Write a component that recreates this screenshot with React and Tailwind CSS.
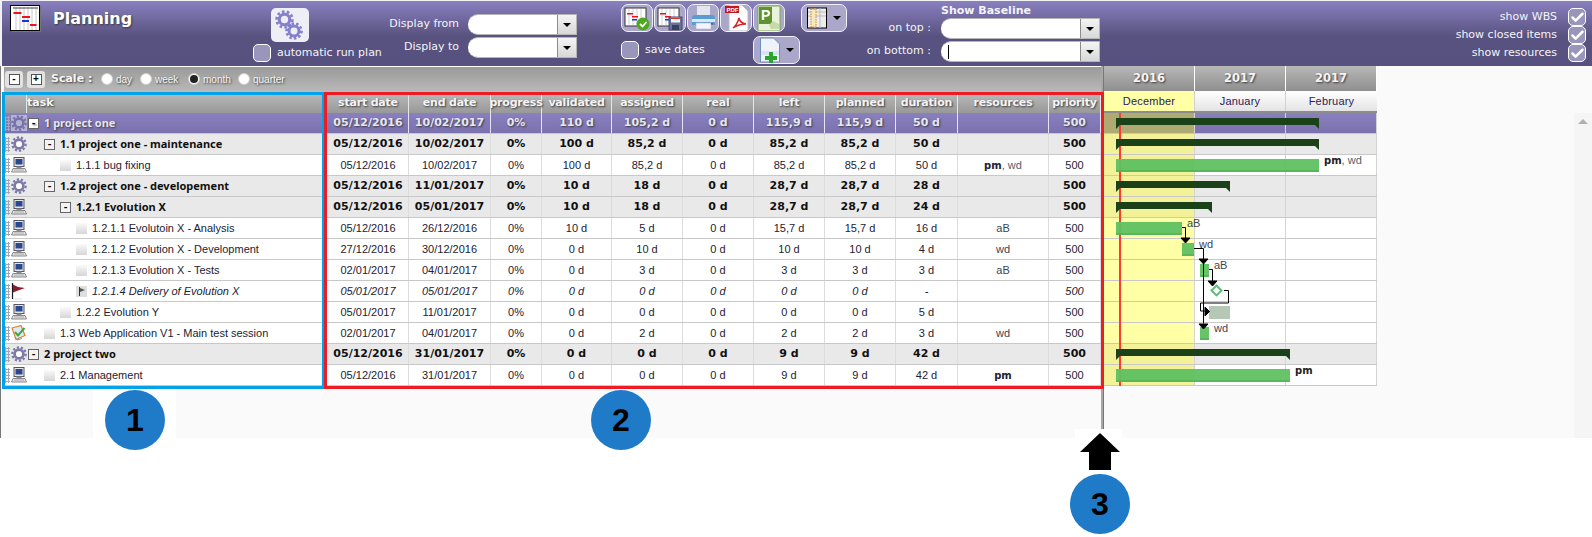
import { Check } from 'lucide-react';

const columns = [
  { key: 'start', title: 'start date', w: 'w-[83px] pl-[2px]' },
  { key: 'end', title: 'end date', w: 'w-[82px]' },
  { key: 'progress', title: 'progress', w: 'w-[51px]' },
  { key: 'validated', title: 'validated', w: 'w-[70px]' },
  { key: 'assigned', title: 'assigned', w: 'w-[71px]' },
  { key: 'real', title: 'real', w: 'w-[71px]' },
  { key: 'left', title: 'left', w: 'w-[71px]' },
  { key: 'planned', title: 'planned', w: 'w-[71px]' },
  { key: 'duration', title: 'duration', w: 'w-[62px]' },
  { key: 'resources', title: 'resources', w: 'w-[91px]' },
  { key: 'priority', title: 'priority', w: 'w-[52px]' },
];

const rows = [
  { level: 0, label: '1 project one', kind: 'top', icon: 'gear', open: true, start: '05/12/2016', end: '10/02/2017', validated: '110 d', assigned: '105,2 d', real: '0 d', left: '115,9 d', planned: '115,9 d', duration: '50 d', dec: 'bg-[#aeaa72]', bar: { type: 'sum', x: 1116, to: 1319 } },
  { level: 1, label: '1.1 project one - maintenance', kind: 'sum', icon: 'gear', open: true, start: '05/12/2016', end: '10/02/2017', validated: '100 d', assigned: '85,2 d', real: '0 d', left: '85,2 d', planned: '85,2 d', duration: '50 d', dec: 'bg-[#f3f299]', bar: { type: 'sum', x: 1116, to: 1319 } },
  { level: 2, label: '1.1.1 bug fixing', icon: 'pc', start: '05/12/2016', end: '10/02/2017', validated: '100 d', assigned: '85,2 d', real: '0 d', left: '85,2 d', planned: '85,2 d', duration: '50 d', res: 'pmwd', dec: 'bg-[#f3f299]', bar: { type: 'task', x: 1116, to: 1319, tag: 'pmwd', tagX: 1324 } },
  { level: 1, label: '1.2 project one - developement', kind: 'sum', icon: 'gear', open: true, start: '05/12/2016', end: '11/01/2017', validated: '10 d', assigned: '18 d', real: '0 d', left: '28,7 d', planned: '28,7 d', duration: '28 d', dec: 'bg-[#f3f299]', bar: { type: 'sum', x: 1116, to: 1230 } },
  { level: 2, label: '1.2.1 Evolution X', kind: 'sum', icon: 'pc', open: true, start: '05/12/2016', end: '05/01/2017', validated: '10 d', assigned: '18 d', real: '0 d', left: '28,7 d', planned: '28,7 d', duration: '24 d', dec: 'bg-[#f3f299]', bar: { type: 'sum', x: 1116, to: 1212 } },
  { level: 3, label: '1.2.1.1 Evolutoin X - Analysis', icon: 'pc', start: '05/12/2016', end: '26/12/2016', validated: '10 d', assigned: '5 d', real: '0 d', left: '15,7 d', planned: '15,7 d', duration: '16 d', res: 'aB', bar: { type: 'task', x: 1116, to: 1182, tag: 'aB', tagX: 1187 } },
  { level: 3, label: '1.2.1.2 Evolution X - Development', icon: 'pc', start: '27/12/2016', end: '30/12/2016', validated: '0 d', assigned: '10 d', real: '0 d', left: '10 d', planned: '10 d', duration: '4 d', res: 'wd', bar: { type: 'task', x: 1182, to: 1194, tag: 'wd', tagX: 1199 } },
  { level: 3, label: '1.2.1.3 Evolution X - Tests', icon: 'pc', start: '02/01/2017', end: '04/01/2017', validated: '0 d', assigned: '3 d', real: '0 d', left: '3 d', planned: '3 d', duration: '3 d', res: 'aB', bar: { type: 'task', x: 1200, to: 1209, tag: 'aB', tagX: 1214 } },
  { level: 3, label: '1.2.1.4 Delivery of Evolution X', italic: true, icon: 'flag', leaf: 'flag', start: '05/01/2017', end: '05/01/2017', validated: '0 d', assigned: '0 d', real: '0 d', left: '0 d', planned: '0 d', duration: '-', bar: { type: 'mile', x: 1216 } },
  { level: 2, label: '1.2.2 Evolution Y', icon: 'pc', start: '05/01/2017', end: '11/01/2017', validated: '0 d', assigned: '0 d', real: '0 d', left: '0 d', planned: '0 d', duration: '5 d', bar: { type: 'idle', x: 1209, to: 1230 } },
  { level: 1, label: '1.3 Web Application V1 - Main test session', icon: 'test', start: '02/01/2017', end: '04/01/2017', validated: '0 d', assigned: '2 d', real: '0 d', left: '2 d', planned: '2 d', duration: '3 d', res: 'wd', bar: { type: 'task', x: 1200, to: 1209, tag: 'wd', tagX: 1214 } },
  { level: 0, label: '2 project two', kind: 'sum', icon: 'gear', open: true, start: '05/12/2016', end: '31/01/2017', validated: '0 d', assigned: '0 d', real: '0 d', left: '9 d', planned: '9 d', duration: '42 d', dec: 'bg-[#f3f299]', bar: { type: 'sum', x: 1116, to: 1290 } },
  { level: 1, label: '2.1 Management', icon: 'pc', start: '05/12/2016', end: '31/01/2017', validated: '0 d', assigned: '0 d', real: '0 d', left: '9 d', planned: '9 d', duration: '42 d', res: 'pm', dec: 'bg-[#f3f299]', bar: { type: 'task', x: 1116, to: 1290, tag: 'pm', tagX: 1295 } },
];

const shadow = '[text-shadow:1px_1px_2px_#3a3a3a]';
const bold = "font-['DejaVu_Sans',sans-serif] font-bold";

const Gear = ({ size = 16, color = '#7b7aa8', hole = '#ffffff' }) => (
  <svg width={size} height={size} viewBox="0 0 16 16">
    <circle cx="8" cy="8" r="6.6" fill="none" stroke={color} strokeWidth="2.4" strokeDasharray="2.2 1.9" />
    <circle cx="8" cy="8" r="4.4" fill="none" stroke={color} strokeWidth="2.6" />
    <circle cx="8" cy="8" r="2.6" fill={hole} />
  </svg>
);

const Computer = () => (
  <svg width="16" height="16" viewBox="0 0 16 16">
    <rect x="3" y="0.5" width="10" height="9" fill="#e4e4e8" stroke="#55555f" />
    <rect x="4.5" y="2" width="7" height="5.5" fill="#28498f" />
    <rect x="5.5" y="9.5" width="5" height="1.5" fill="#8a8a92" />
    <path d="M2 11.5h12l1.5 3.5H.5z" fill="#e6e6e6" stroke="#6d6d73" strokeWidth="0.8" />
    <path d="M3 13h10" stroke="#9a9a9a" strokeWidth="0.8" />
  </svg>
);

const Flag = () => (
  <svg width="16" height="17" viewBox="0 0 16 17">
    <path d="M1.5 0v16" stroke="#1a1a1a" strokeWidth="1.2" />
    <path d="M2 1.5l5 2.5 7 1-7 2.5-5 2z" fill="#8f1a2c" />
    <path d="M2 16h9" stroke="#dddddd" strokeWidth="1" />
  </svg>
);

const TestIcon = () => (
  <svg width="16" height="16" viewBox="0 0 16 16">
    <path d="M1 3l9-2.5 4 10-9 4z" fill="#dfe8f5" stroke="#d9822b" strokeWidth="1.2" />
    <path d="M4 7l3 3.5L13.5 3" fill="none" stroke="#3fa845" strokeWidth="2" />
    <path d="M4 12l2 3 5-1.5" fill="none" stroke="#7d8fb5" strokeWidth="1" />
  </svg>
);

const RowIcon = ({ name, top }) => {
  if (name === 'gear') return <Gear hole={top ? '#b5b2d6' : '#ffffff'} color={top ? '#7573a8' : '#7b7aa8'} />;
  if (name === 'pc') return <Computer />;
  if (name === 'flag') return <Flag />;
  return <TestIcon />;
};

const Logo = () => (
  <svg width="31" height="27" viewBox="0 0 31 27">
    <rect x="0.5" y="0.5" width="29" height="25" fill="#ffffff" stroke="#000000" />
    <path d="M6 2v23M10 2v23M14 2v23M18 2v23M22 2v23M26 2v23" stroke="#c8c8c8" />
    <path d="M3 3h25" stroke="#444444" />
    <rect x="3.5" y="7" width="8" height="2" fill="#e8141c" />
    <rect x="12" y="11" width="8" height="2" fill="#e8141c" />
    <rect x="12" y="15" width="7" height="2" fill="#1f33d8" />
    <rect x="20" y="19" width="6.5" height="2" fill="#e8141c" />
    <path d="M30.5 2v24.5H2" stroke="#777777" fill="none" />
  </svg>
);

const MiniGantt = () => (
  <g>
    <rect x="2" y="3" width="21" height="18" fill="#ffffff" stroke="#333333" />
    <path d="M6 4v16M10 4v16M14 4v16M18 4v16" stroke="#cfcfcf" />
    <rect x="4" y="8" width="6" height="1.5" fill="#e8141c" />
    <rect x="9" y="11" width="6" height="1.5" fill="#e8141c" />
    <rect x="9" y="14" width="5" height="1.5" fill="#1f33d8" />
  </g>
);

const ToolIcon = ({ name }) => {
  if (name === 'validate') {
    return (
      <svg width="28" height="26" viewBox="0 0 28 26">
        <MiniGantt />
        <circle cx="20" cy="19" r="6.5" fill="#4ea81e" />
        <path d="M17 19l2.5 2.5 4-4.5" fill="none" stroke="#ffffff" strokeWidth="1.8" />
      </svg>
    );
  }
  if (name === 'save') {
    return (
      <svg width="28" height="26" viewBox="0 0 28 26">
        <MiniGantt />
        <rect x="13" y="12" width="13" height="13" fill="#67719a" stroke="#444a6c" />
        <rect x="15" y="12.5" width="9" height="5" fill="#f3f3f3" />
        <rect x="15" y="12.5" width="9" height="1.5" fill="#d9352e" />
        <rect x="16" y="20" width="7" height="5" fill="#3a3f5e" />
      </svg>
    );
  }
  if (name === 'print') {
    return (
      <svg width="28" height="26" viewBox="0 0 28 26">
        <rect x="8" y="1" width="13" height="9" fill="#e3e6ef" />
        <path d="M3 13q0-3 3-3h17q3 0 3 3v7H3z" fill="#5c9bd0" />
        <rect x="3" y="14" width="23" height="3" fill="#d7e7f4" />
        <rect x="7" y="18" width="15" height="6" fill="#f4f5f9" stroke="#a9b4c8" strokeWidth="0.6" />
        <rect x="22" y="18" width="2" height="1.5" fill="#d9352e" />
      </svg>
    );
  }
  if (name === 'pdf') {
    return (
      <svg width="28" height="28" viewBox="0 0 28 28">
        <path d="M7 1h13l6 6v20H7z" fill="#ffffff" stroke="#b9b9b9" />
        <rect x="3" y="2" width="14" height="7" fill="#c4161c" />
        <text x="4.5" y="8" fontSize="6" fontWeight="700" fill="#ffffff" fontFamily="Liberation Sans, sans-serif">PDF</text>
        <path d="M11 24q4-3 6-10q1 5 7 6q-7 0-13 4z" fill="none" stroke="#d8262c" strokeWidth="1.5" />
      </svg>
    );
  }
  if (name === 'project') {
    return (
      <svg width="28" height="28" viewBox="0 0 28 28">
        <rect x="3" y="2" width="22" height="25" fill="#e9f2da" stroke="#7ea654" />
        <rect x="4" y="3" width="13" height="17" fill="#5e9334" />
        <text x="6" y="16" fontSize="14" fontWeight="700" fill="#ffffff" fontFamily="Liberation Sans, sans-serif">P</text>
        <path d="M14 21l4-4 6 3v5h-8z" fill="#c5dba8" />
      </svg>
    );
  }
  if (name === 'columns') {
    return (
      <svg width="20" height="22" viewBox="0 0 20 22">
        <rect x="0.5" y="1" width="19" height="20" fill="#ececec" stroke="#000000" />
        <path d="M8 1v20M13 1v20M1 5h18M1 9h18" stroke="#bdbdbd" />
        <rect x="4" y="2" width="5" height="18" fill="#f6e7bd" stroke="#d88a16" strokeDasharray="1.5 1" />
      </svg>
    );
  }
  return (
    <svg width="20" height="26" viewBox="0 0 20 26">
      <path d="M0.5 1h13l6 6v18H.5z" fill="#eef3fb" stroke="#6f8fbc" />
      <path d="M1 14h18v4H1z" fill="#d7e2f2" />
      <path d="M9 15h4v4h4v4h-4v3H9v-3H5v-4h4z" fill="#2aa52a" />
    </svg>
  );
};

const Caret = () => <span className="w-0 h-0 border-x-[4px] border-x-transparent border-t-[4px] border-t-black" />;

const ToolButton = ({ name, width = 'w-[32px]', height = 'h-[28px]', caret }) => (
  <button className={`${width} ${height} shrink-0 rounded-[7px] border border-[#f0f0f8] bg-[#aaa7cb] flex items-center justify-center gap-[6px] overflow-hidden`}>
    <ToolIcon name={name} />
    {caret && <Caret />}
  </button>
);

const CheckBox = ({ checked, className = '' }) => (
  <span className={`w-[18px] h-[18px] shrink-0 rounded-[5px] border border-white bg-[#9896bb] flex items-center justify-center ${className}`}>
    {checked && <Check size={15} strokeWidth={4} className="text-white" />}
  </span>
);

const Combo = ({ width, caretMark }) => (
  <div className={`${width} h-[21px] flex rounded-l-[10px] bg-white border-y border-r border-[#b5b5b5]`}>
    <div className="flex-1 flex items-center pl-[7px]">
      {caretMark && <span className="w-px h-[14px] bg-black" />}
    </div>
    <div className="w-[19px] border-l border-[#8c8c8c] bg-gradient-to-b from-[#f4f4f4] to-[#d8d8d8] flex items-center justify-center">
      <Caret />
    </div>
  </div>
);

const Toolbar = () => (
  <div className="h-[66px] flex pl-[3px] border-t border-l-2 border-[#f2f2f2] bg-gradient-to-b from-[#8a80c0] via-[#58527f] via-[55%] to-[#56517f] text-[#f4f4f8] text-[12px] font-['DejaVu_Sans',sans-serif]">
    <div className="w-[248px] shrink-0 flex pl-[5px] pt-[4px]">
      <Logo />
      <span className={`ml-[12px] mt-[2px] text-[16px] ${bold} text-white ${shadow}`}>Planning</span>
    </div>
    <div className="w-[130px] shrink-0">
      <div className="ml-[18px] mt-[7px] w-[38px] h-[34px] rounded-[5px] bg-[#eeeef6] relative">
        <span className="absolute left-[4px] top-[2px]"><Gear size={19} color="#8480cc" hole="#eeeef6" /></span>
        <span className="absolute left-[14px] top-[14px]"><Gear size={18} color="#8480cc" hole="#eeeef6" /></span>
      </div>
      <div className="mt-[2px] flex items-center gap-[6px] whitespace-nowrap text-[11px]">
        <CheckBox />
        automatic run plan
      </div>
    </div>
    <div className="w-[238px] shrink-0 pt-[13px] text-[11px]">
      <div className="flex items-center">
        <span className="w-[76px] text-right">Display from</span>
        <span className="ml-[9px]"><Combo width="w-[109px]" /></span>
      </div>
      <div className="flex items-center mt-[2px]">
        <span className="w-[76px] text-right">Display to</span>
        <span className="ml-[9px]"><Combo width="w-[109px]" /></span>
      </div>
    </div>
    <div className="w-[180px] shrink-0 pt-[3px]">
      <div className="flex gap-px">
        <ToolButton name="validate" />
        <ToolButton name="save" />
        <ToolButton name="print" />
        <ToolButton name="pdf" />
        <ToolButton name="project" />
      </div>
      <div className="flex mt-[4px]">
        <div className="w-[132px] flex items-center gap-[6px] text-[11px] mt-[5px] h-[18px]">
          <CheckBox />
          save dates
        </div>
        <ToolButton name="add" width="w-[47px]" height="h-[28px]" caret />
      </div>
    </div>
    <div className="w-[46px] shrink-0 pt-[3px]">
      <ToolButton name="columns" width="w-[46px]" caret />
    </div>
    <div className="w-[253px] shrink-0 text-[11px]">
      <div className={`h-[17px] ml-[94px] ${bold} text-[11px] leading-[20px] whitespace-nowrap`}>Show Baseline</div>
      <div className="flex items-center">
        <span className="w-[84px] text-right">on top :</span>
        <span className="ml-[10px]"><Combo width="w-[159px]" /></span>
      </div>
      <div className="flex items-center mt-[2px]">
        <span className="w-[84px] text-right">on bottom :</span>
        <span className="ml-[10px]"><Combo width="w-[159px]" caretMark /></span>
      </div>
    </div>
    <div className="flex-1 pt-[7px] pr-[6px] text-[11px] flex flex-col items-end">
      {['show WBS', 'show closed items', 'show resources'].map((item) => (
        <div key={item} className="h-[18px] flex items-center gap-[11px]">
          {item}
          <CheckBox checked />
        </div>
      ))}
    </div>
  </div>
);

const Radio = ({ label, on, width }) => (
  <div className={`${width} flex items-center gap-[3px]`}>
    <span className="w-[12px] h-[12px] rounded-full bg-white border border-[#cfcfcf] flex items-center justify-center">
      {on && <span className="w-[8px] h-[8px] rounded-full bg-[#222222]" />}
    </span>
    <span className={`text-[10px] text-[#f4f4f4] ${shadow}`}>{label}</span>
  </div>
);

const SmallBtn = ({ sign }) => (
  <span className="w-[18px] h-[17px] rounded-[3px] bg-[#e2e2e2] flex items-center justify-center">
    <span className="w-[11px] h-[11px] bg-white border border-[#555555] text-[10px] leading-[8px] text-center text-black font-bold">{sign}</span>
  </span>
);

const ScaleBar = () => (
  <div className="h-[25px] flex items-center pl-px border-t border-white bg-gradient-to-b from-[#9a9a9a] to-[#b8b8b8]">
    <SmallBtn sign="-" />
    <span className="ml-[4px]"><SmallBtn sign="+" /></span>
    <span className={`ml-[6px] w-[50px] text-[11px] ${bold} text-[#f6f6f6] ${shadow}`}>Scale :</span>
    <Radio label="day" width="w-[39px]" />
    <Radio label="week" width="w-[48px]" />
    <Radio label="month" on width="w-[50px]" />
    <Radio label="quarter" width="w-[60px]" />
  </div>
);

const headCell = `h-full flex items-center justify-center border-r border-[#e6e6e6] text-[11px] tracking-[-0.2px] ${bold} text-[#f4f4f4] ${shadow}`;

const HeaderRow = () => (
  <div className="h-[22px] flex bg-gradient-to-b from-[#bdbdbd] to-[#989898] pt-[3px]">
    <div className="w-[23px] border-r border-[#e6e6e6]" />
    <div className={`w-[299px] text-[11px] ${bold} text-[#f4f4f4] ${shadow} flex items-center`}>task</div>
    {columns.map((col) => (
      <div key={col.key} className={`${col.w} ${headCell}`}>{col.title}</div>
    ))}
  </div>
);

const Resources = ({ value }) => {
  if (value === 'pmwd') return <span><b className="font-['DejaVu_Sans',sans-serif] text-[10px]">pm</b><span className="text-[#55606f]">, wd</span></span>;
  if (value === 'pm') return <b className="font-['DejaVu_Sans',sans-serif] text-[10px]">pm</b>;
  return <span className="text-[#3d4450]">{value}</span>;
};

const rowStyle = (row) => {
  if (row.kind === 'top') return `bg-gradient-to-b from-[#8a80c0] to-[#7a71ad] text-[#e6e6f4] ${bold} ${shadow}`;
  if (row.kind === 'sum') return `bg-[#e9e9e9] text-[#111111] ${bold}`;
  return 'bg-white text-[#222233]';
};

const GridRow = ({ row }) => {
  const top = row.kind === 'top';
  const line = top ? 'border-[#e4e4f2]' : 'border-[#dcdcdc]';
  const strong = top || row.kind === 'sum';
  return (
    <div className={`h-[21px] flex box-border border-b border-[#c8c8c8] text-[11px] ${row.italic ? 'italic' : ''} ${rowStyle(row)}`}>
      <div className="w-[23px] shrink-0 flex items-center">
        <span className="w-[6px] h-[15px] bg-[radial-gradient(#a6a6b4_1.2px,transparent_1.4px)] bg-[length:3px_3px]" />
        <span className={`ml-[1px] ${top ? 'bg-[#b5b2d6]' : ''}`}><RowIcon name={row.icon} top={top} /></span>
      </div>
      <div className="w-[299px] shrink-0 flex items-center whitespace-nowrap">
        <span className={`shrink-0 ${row.level === 0 ? 'ml-px' : row.level === 1 ? 'ml-[17px]' : row.level === 2 ? 'ml-[33px]' : 'ml-[49px]'}`}>
          {row.open ? (
            <span className={`block w-[11px] h-[11px] border border-[#666666] text-black text-[9px] leading-[8px] text-center ${top ? 'bg-white' : 'bg-[#f4f4f4]'}`}>-</span>
          ) : row.leaf === 'flag' ? (
            <span className="flex items-center w-[11px] h-[11px] bg-[#dedede] pl-[3px]">
              <svg width="7" height="9" viewBox="0 0 7 9"><path d="M0.5 0v9" stroke="#333333" /><path d="M1 1l5 2-5 2z" fill="#555555" /></svg>
            </span>
          ) : (
            <span className="block w-[11px] h-[11px] bg-gradient-to-b from-[#fafafa] to-[#d6d6d6]" />
          )}
        </span>
        <span className={`ml-[5px] ${strong ? "font-['Noto_Sans',sans-serif] text-[11px]" : ''}`}>{row.label}</span>
      </div>
      {columns.map((col) => (
        <div key={col.key} className={`${col.w} h-full flex items-center justify-center border-r ${line}`}>
          {col.key === 'progress' ? '0%' : col.key === 'priority' ? '500' : col.key === 'resources' ? (row.res && <Resources value={row.res} />) : row[col.key]}
        </div>
      ))}
    </div>
  );
};

const GanttBar = ({ bar }) => {
  if (bar.type === 'sum') {
    return (
      <div className="absolute top-[5px] h-[7px] bg-[#1a4118]" style={{ left: bar.x - 1104, width: bar.to - bar.x }}>
        <span className="absolute left-0 top-full w-0 h-0 border-r-[4px] border-r-transparent border-t-[4px] border-t-[#1a4118]" />
        <span className="absolute right-0 top-full w-0 h-0 border-l-[4px] border-l-transparent border-t-[4px] border-t-[#1a4118]" />
      </div>
    );
  }
  if (bar.type === 'mile') {
    return <div className="absolute top-[5px] w-[9px] h-[9px] rotate-45 bg-white border-2 border-[#62b878]" style={{ left: bar.x - 1104 - 4 }} />;
  }
  const width = bar.to - bar.x;
  return (
    <>
      {bar.type === 'idle' ? (
        <div className="absolute top-[4px] h-[13px] bg-[#b5c8b5]" style={{ left: bar.x - 1104, width }} />
      ) : (
        <div className="absolute top-[4px] h-[13px] bg-[#5fc161] opacity-95 border-b-2 border-[#50b454]" style={{ left: bar.x - 1104, width }} />
      )}
      {bar.tag && (
        <div className="absolute -top-[2px] text-[11px] leading-[14px] whitespace-nowrap" style={{ left: bar.tagX - 1104 }}>
          <Resources value={bar.tag} />
        </div>
      )}
    </>
  );
};

const GanttRow = ({ row }) => {
  const top = row.kind === 'top';
  const grey = row.kind === 'sum';
  const bg = top ? 'bg-gradient-to-b from-[#8a80c0] to-[#7a71ad]' : grey ? 'bg-[#e9e9e9]' : 'bg-white';
  const cell = 'w-[91px] h-full border-r border-[#d4d4d4]';
  return (
    <div className={`relative h-[21px] flex box-border border-b border-[#c8c8c8] ${bg}`}>
      <div className={`${cell} ${row.dec || 'bg-[#ffffa6]'}`} />
      <div className={cell} />
      <div className={cell} />
    </div>
  );
};

const Links = () => (
  <svg className="absolute left-0 top-0 w-[273px] h-[273px]" viewBox="1104 113 273 273" fill="none" stroke="#000000">
    <path d="M1182 227.5h3.5v12" />
    <path d="M1181 238h9l-4.5 5z" fill="#000000" />
    <path d="M1194 248.5h9.5v75" />
    <path d="M1199 259h9l-4.5 5z" fill="#000000" />
    <path d="M1199 324h9l-4.5 5z" fill="#000000" />
    <path d="M1209 269.5h3.5v13" />
    <path d="M1208 281h9l-4.5 5z" fill="#000000" />
    <path d="M1224 290.5h4.5v12.5h-28v8h5" />
    <path d="M1205 307v9l4.5-4.5z" fill="#000000" />
  </svg>
);

const Gantt = () => (
  <div className="w-[488px] shrink-0 text-[#222222]">
    <div className="w-[273px] h-[25px] flex bg-gradient-to-b from-[#b8b8b8] to-[#8f8f8f]">
      {['2016', '2017', '2017'].map((year, i) => (
        <div key={i} className={`w-[91px] flex items-center justify-center border-r border-white text-[11.5px] ${bold} text-[#f4f4f4] ${shadow}`}>{year}</div>
      ))}
    </div>
    <div className="w-[273px] h-[22px] flex border-b-2 border-[#8c8c8c] bg-gradient-to-b from-[#ffffff] to-[#e4e4e4] text-[11px] text-[#2a1a5a] tracking-[0.2px]">
      <div className="w-[91px] flex items-center justify-center border-r border-[#d0d0d0] bg-[#ffffa6]">December</div>
      <div className="w-[91px] flex items-center justify-center border-r border-[#d0d0d0]">January</div>
      <div className="w-[91px] flex items-center justify-center">February</div>
    </div>
    <div className="flex items-start">
      <div className="relative w-[273px] h-[273px]">
        {rows.map((row) => <GanttRow key={row.label} row={row} />)}
        <div className="absolute left-[15px] top-0 h-[273px] w-[2px] bg-[#ff3b30]" />
        {rows.map((row, i) => (
          <div key={row.label} className="absolute left-0 w-[273px] h-[21px]" style={{ top: i * 21 }}>
            <GanttBar bar={row.bar} />
          </div>
        ))}
        <Links />
      </div>
      <div className="flex-1 flex justify-end">
        <div className="w-[18px] h-[325px] bg-[#f5f5f5] flex justify-center pt-[6px]">
          <span className="w-0 h-0 border-x-[5px] border-x-transparent border-b-[5px] border-b-[#b0b0b0]" />
        </div>
      </div>
    </div>
  </div>
);

const Badge = ({ n, className }) => (
  <div className={`absolute w-[60px] h-[60px] rounded-full bg-[#1f7bc8] flex items-center justify-center text-[32px] font-bold text-black font-['Liberation_Sans',sans-serif] ${className}`}>{n}</div>
);

export default function App() {
  return (
    <div className="relative w-[1592px] h-[537px] overflow-hidden bg-white font-['Liberation_Sans',sans-serif]">
      <Toolbar />
      <div className="h-[372px] flex bg-[#fafafa]">
        <div className="w-[1102px] shrink-0 pl-[3px] border-l-2 border-[#777777] -ml-px">
          <ScaleBar />
          <HeaderRow />
          {rows.map((row) => <GridRow key={row.label} row={row} />)}
        </div>
        <div className="w-[3px] shrink-0 bg-[#a8a8a8] border-r border-[#777777]" />
        <Gantt />
      </div>

      {/* annotations drawn over the screenshot */}
      <div className="absolute left-[2px] top-[92px] w-[323px] h-[297px] border-[3px] border-[#00a2e8]" />
      <div className="absolute left-[324px] top-[92px] w-[780px] h-[297px] border-[3px] border-[#ed1c24]" />
      <div className="absolute left-[93px] top-[389px] w-[83px] h-[49px] bg-white" />
      <div className="absolute left-[1075px] top-[429px] w-[47px] h-[10px] bg-white" />
      <Badge n="1" className="left-[105px] top-[390px]" />
      <Badge n="2" className="left-[591px] top-[390px]" />
      <Badge n="3" className="left-[1070px] top-[474px]" />
      <svg className="absolute left-[1080px] top-[433px] w-[40px] h-[37px]" viewBox="0 0 40 37">
        <path d="M20 0L40 19H31V37H9V19H0z" fill="#000000" />
      </svg>
    </div>
  );
}
